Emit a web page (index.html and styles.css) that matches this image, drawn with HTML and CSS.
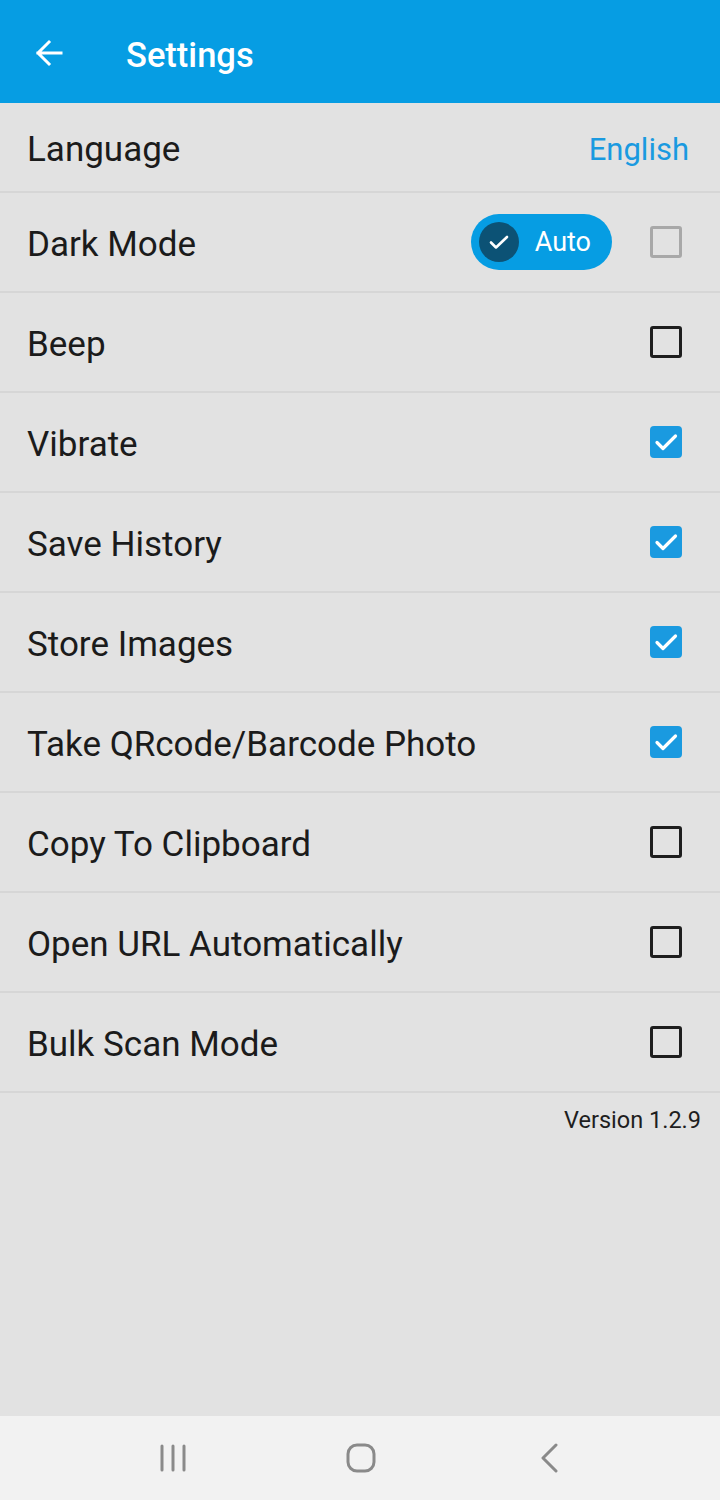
FILE: index.html
```html
<!DOCTYPE html>
<html lang="en">
<head>
    <meta charset="UTF-8">
    <meta name="viewport" content="width=device-width, initial-scale=1.0">
    <title>Settings</title>
    <link rel="stylesheet" href="styles.css">
</head>
<body>
    <div class="screen">
        <header class="appbar">
            <svg class="back" width="30" height="30" viewBox="0 0 30 30">
                <path d="M27 15H4M15 4L4 15l11 11" fill="none" stroke="#fff" stroke-width="3" stroke-linecap="square"/>
            </svg>
            <h1>Settings</h1>
        </header>

        <main class="list">
            <div class="row first">
                <span class="label">Language</span>
                <span class="value">English</span>
            </div>
            <div class="row">
                <span class="label">Dark Mode</span>
                <div class="auto-chip">
                    <span class="chip-check">
                        <svg width="24" height="24" viewBox="0 0 24 24"><path d="M4 12.5l5 5L20 7" fill="none" stroke="#fff" stroke-width="2.6" stroke-linecap="round" stroke-linejoin="round"/></svg>
                    </span>
                    <span>Auto</span>
                </div>
                <span class="box disabled"></span>
            </div>
            <div class="row">
                <span class="label">Beep</span>
                <span class="box"></span>
            </div>
            <div class="row">
                <span class="label">Vibrate</span>
                <span class="box checked"><svg width="32" height="32" viewBox="0 0 32 32"><path d="M7 16.5l6 6L25.5 10" fill="none" stroke="#fff" stroke-width="3.2" stroke-linecap="round" stroke-linejoin="round"/></svg></span>
            </div>
            <div class="row">
                <span class="label">Save History</span>
                <span class="box checked"><svg width="32" height="32" viewBox="0 0 32 32"><path d="M7 16.5l6 6L25.5 10" fill="none" stroke="#fff" stroke-width="3.2" stroke-linecap="round" stroke-linejoin="round"/></svg></span>
            </div>
            <div class="row">
                <span class="label">Store Images</span>
                <span class="box checked"><svg width="32" height="32" viewBox="0 0 32 32"><path d="M7 16.5l6 6L25.5 10" fill="none" stroke="#fff" stroke-width="3.2" stroke-linecap="round" stroke-linejoin="round"/></svg></span>
            </div>
            <div class="row">
                <span class="label">Take QRcode/Barcode Photo</span>
                <span class="box checked"><svg width="32" height="32" viewBox="0 0 32 32"><path d="M7 16.5l6 6L25.5 10" fill="none" stroke="#fff" stroke-width="3.2" stroke-linecap="round" stroke-linejoin="round"/></svg></span>
            </div>
            <div class="row">
                <span class="label">Copy To Clipboard</span>
                <span class="box"></span>
            </div>
            <div class="row">
                <span class="label">Open URL Automatically</span>
                <span class="box"></span>
            </div>
            <div class="row">
                <span class="label">Bulk Scan Mode</span>
                <span class="box"></span>
            </div>
            <p class="version">Version 1.2.9</p>
        </main>

        <nav class="navbar">
            <svg width="30" height="30" viewBox="0 0 30 30">
                <path d="M4 3v24M15 3v24M26 3v24" stroke="#8a8a8a" stroke-width="3" stroke-linecap="round"/>
            </svg>
            <svg width="30" height="30" viewBox="0 0 30 30">
                <rect x="2" y="2" width="26" height="26" rx="9" fill="none" stroke="#8a8a8a" stroke-width="3"/>
            </svg>
            <svg width="30" height="30" viewBox="0 0 30 30">
                <path d="M22 2L9 15l13 13" fill="none" stroke="#8a8a8a" stroke-width="3" stroke-linecap="round" stroke-linejoin="round"/>
            </svg>
        </nav>
    </div>
</body>
</html>
```

FILE: styles.css
```css
* {
    margin: 0;
    padding: 0;
    box-sizing: border-box;
}

body {
    font-family: Roboto, "Noto Sans", sans-serif;
    background-color: #e2e2e2;
    color: #1b1b1b;
}

.screen {
    display: flex;
    flex-direction: column;
    height: 1500px;
}

.appbar {
    height: 103px;
    background-color: #069de3;
    display: flex;
    align-items: center;
    padding: 3px 0 0 34px;
    color: #fff;
}

.appbar .back {
    margin-right: 62px;
}

.appbar h1 {
    font-size: 34.5px;
    font-weight: 500;
    padding-top: 4px;
}

.list {
    flex: 1;
}

.row {
    height: 100px;
    display: flex;
    align-items: center;
    padding: 0 38px 0 27px;
    border-bottom: 2px solid #d6d6d6;
    font-size: 35px;
}

.row.first {
    height: 90px;
    padding-right: 31px;
}

.label {
    flex: 1;
    padding-top: 4px;
}

.value {
    color: #1a9ae0;
    font-size: 31px;
    padding-top: 4px;
}

.auto-chip {
    display: flex;
    align-items: center;
    background-color: #069de3;
    color: #fff;
    height: 56px;
    border-radius: 28px;
    padding: 0 21px 0 8px;
    font-size: 27px;
    margin-right: 38px;
}

.chip-check {
    width: 40px;
    height: 40px;
    border-radius: 50%;
    background-color: #0c5275;
    display: flex;
    align-items: center;
    justify-content: center;
    margin-right: 16px;
}

.box {
    width: 32px;
    height: 32px;
    border: 3px solid #1e1e1e;
    border-radius: 3px;
    display: flex;
    align-items: center;
    justify-content: center;
}

.box.disabled {
    border-color: #a8a8a8;
}

.box.checked {
    border: none;
    border-radius: 4px;
    background-color: #1a9ae0;
}

.version {
    text-align: right;
    font-size: 23.5px;
    padding: 13px 19px 0 0;
    color: #1e1e1e;
}

.navbar {
    height: 84px;
    background-color: #f2f2f2;
    display: flex;
    align-items: center;
    gap: 158px;
    padding-left: 158px;
}
```
